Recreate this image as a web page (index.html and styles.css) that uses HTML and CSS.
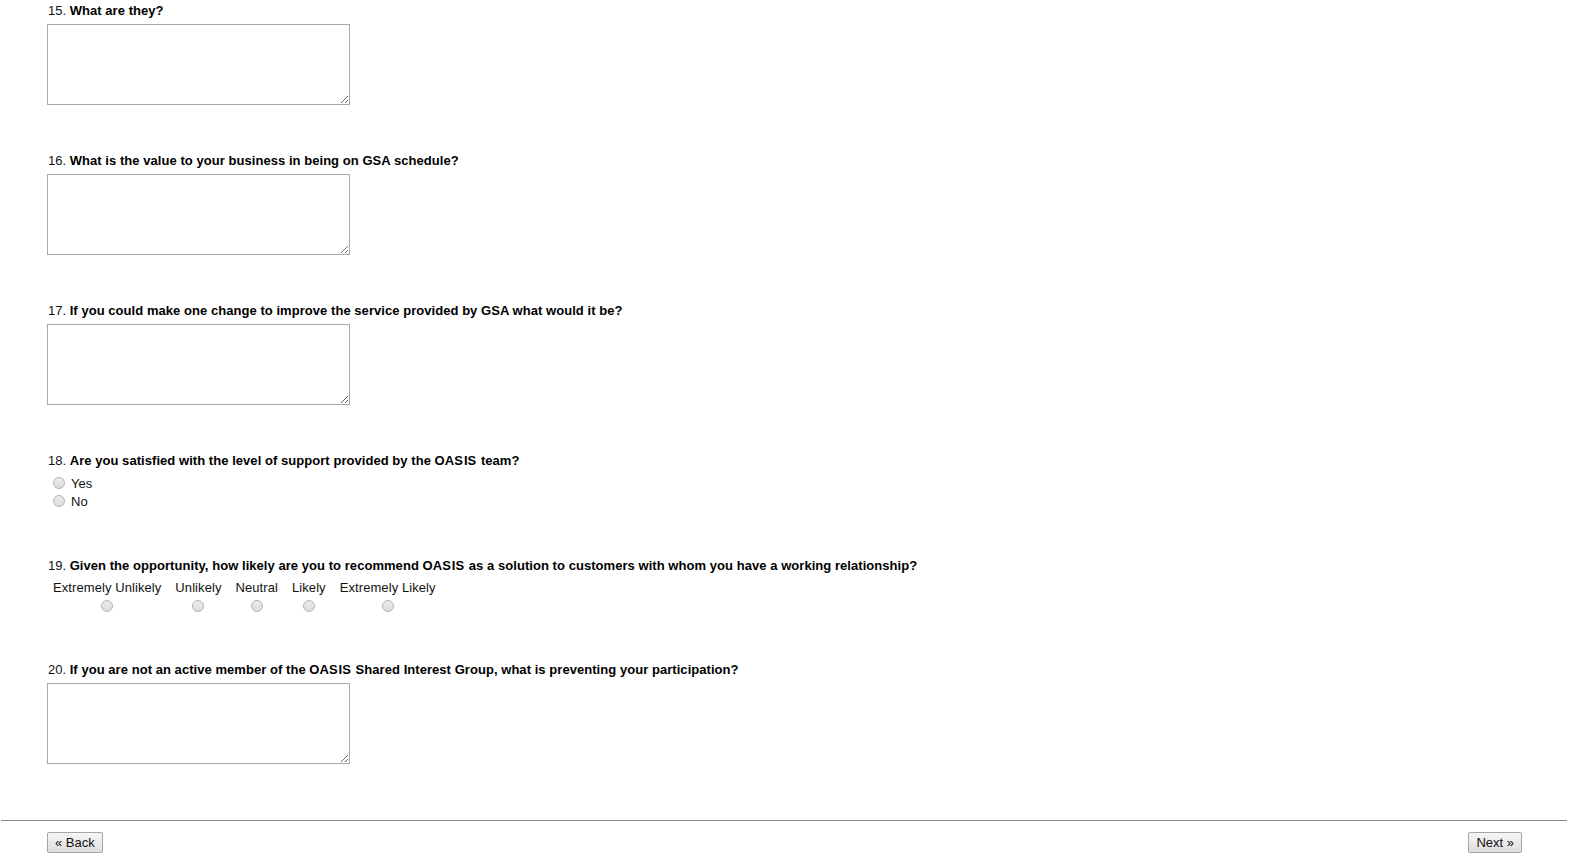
FILE: index.html
```html
<!DOCTYPE html>
<html>
<head>
<meta charset="utf-8">
<link rel="stylesheet" href="styles.css">
</head>
<body>
<div class="survey">
  <div class="question">
    <div class="qlabel"><span class="num">15.</span> <b>What are they?</b></div>
    <textarea class="answer"></textarea>
  </div>
  <div class="question">
    <div class="qlabel"><span class="num">16.</span> <b>What is the value to your business in being on GSA schedule?</b></div>
    <textarea class="answer"></textarea>
  </div>
  <div class="question">
    <div class="qlabel"><span class="num">17.</span> <b>If you could make one change to improve the service provided by GSA what would it be?</b></div>
    <textarea class="answer"></textarea>
  </div>
  <div class="question">
    <div class="qlabel"><span class="num">18.</span> <b>Are you satisfied with the level of support provided by the OA<span class="ls">S</span>I<span class="ls">S</span> team?</b></div>
    <div class="choices">
      <label class="choice"><input type="radio" name="q18" class="radio"><span>Yes</span></label>
      <label class="choice"><input type="radio" name="q18" class="radio"><span>No</span></label>
    </div>
  </div>
  <div class="question question-scale">
    <div class="qlabel"><span class="num">19.</span> <b>Given the opportunity, how likely are you to recommend OA<span class="ls">S</span>I<span class="ls">S</span> as a solution to customers with whom you have a working relationship?</b></div>
    <table class="scale">
      <tr>
        <td>Extremely Unlikely</td>
        <td>Unlikely</td>
        <td>Neutral</td>
        <td>Likely</td>
        <td>Extremely Likely</td>
      </tr>
      <tr>
        <td><input type="radio" name="q19" class="radio"></td>
        <td><input type="radio" name="q19" class="radio"></td>
        <td><input type="radio" name="q19" class="radio"></td>
        <td><input type="radio" name="q19" class="radio"></td>
        <td><input type="radio" name="q19" class="radio"></td>
      </tr>
    </table>
  </div>
  <div class="question">
    <div class="qlabel"><span class="num">20.</span> <b>If you are not an active member of the OA<span class="ls">S</span>I<span class="ls">S</span> Shared Interest Group, what is preventing your participation?</b></div>
    <textarea class="answer"></textarea>
  </div>
</div>
<hr class="divider">
<div class="nav">
  <button class="btn">« Back</button>
  <button class="btn">Next »</button>
</div>
</body>
</html>
```

FILE: styles.css
```css
html, body {
  margin: 0;
  padding: 0;
  background: #fff;
}
body {
  font-family: "Liberation Sans", Arial, sans-serif;
  font-size: 13px;
  color: #111;
  line-height: 15px;
}
.survey {
  padding: 3px 0 0 47px;
}
.question {
  margin-bottom: 48px;
}
.question:last-child {
  margin-bottom: 0;
}
.question-scale {
  padding-bottom: 1px;
}
.qlabel {
  padding-left: 1px;
  height: 15px;
  white-space: nowrap;
}
.qlabel .num {
  font-weight: normal;
}
.qlabel b {
  font-weight: bold;
  color: #000;
  letter-spacing: 0.05px;
}
.ls {
  letter-spacing: 1px;
}
.answer {
  display: block;
  box-sizing: border-box;
  width: 303px;
  height: 81px;
  margin: 6px 0 0 0;
  border: 1px solid #a9a9a9;
  padding: 2px;
  font-family: "Liberation Mono", monospace;
  font-size: 13px;
  resize: both;
  background: #fff;
}
.choices {
  padding-top: 6px;
}
.choice {
  display: flex;
  align-items: center;
  height: 18px;
}
.radio {
  appearance: none;
  -webkit-appearance: none;
  box-sizing: border-box;
  width: 12px;
  height: 12px;
  border-radius: 50%;
  border: 1px solid #b4b4b4;
  background: linear-gradient(#ececec, #dcdcdc);
  margin: 0;
  padding: 0;
  display: inline-block;
  vertical-align: middle;
}
.choice .radio {
  margin: 0 6px 0 6px;
}
.scale {
  border-collapse: collapse;
  margin-top: 7px;
  margin-left: -1px;
}
.scale td {
  padding: 0 7px;
  text-align: center;
  height: 18px;
  vertical-align: top;
  white-space: nowrap;
  letter-spacing: 0.08px;
}
.scale tr:last-child td {
  height: 15px;
  vertical-align: middle;
}
.scale tr:last-child td .radio {
  display: block;
  margin: 0 auto;
}
.divider {
  margin: 56px 2px 0 1px;
  border: 0;
  height: 1px;
  background: #8a8a8a;
}
.nav {
  display: flex;
  justify-content: space-between;
  padding: 11px 47px 0 47px;
}
.btn {
  font-family: "Liberation Sans", Arial, sans-serif;
  font-size: 13px;
  color: #111;
  height: 21px;
  padding: 0 7px;
  border: 1px solid #a6a6a6;
  border-radius: 2px;
  background: linear-gradient(#f6f6f6, #dedede);
  line-height: 19px;
}
```
